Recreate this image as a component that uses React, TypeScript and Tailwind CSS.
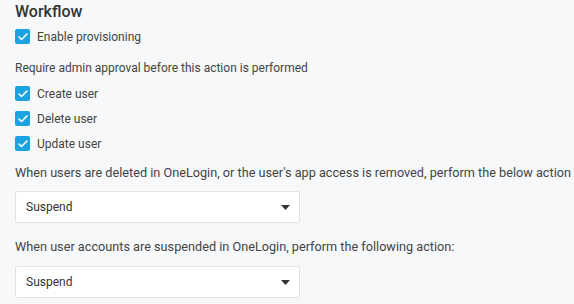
import { Check } from "lucide-react";

function Box({ label }: { label: string }) {
  return (
    <label className="flex items-center gap-[7px] h-[15px]">
      <span className="w-[15px] h-[15px] rounded-[2px] bg-[#1aa3e0] flex items-center justify-center">
        <Check size={12} strokeWidth={3.2} className="text-white" />
      </span>
      <span className="text-[12px] text-[#444]">{label}</span>
    </label>
  );
}

function Select({ value }: { value: string }) {
  return (
    <div className="w-[285px] h-[32px] bg-white border border-[#e3e3e3] rounded-[2px] flex items-center justify-between pl-[10px] pr-[9px]">
      <span className="text-[12px] text-[#333]">{value}</span>
      <svg width="9" height="5" viewBox="0 0 9 5">
        <path d="M0 0h9L4.5 5z" fill="#333" />
      </svg>
    </div>
  );
}

export default function App() {
  return (
    <main className="w-[574px] h-[304px] bg-[#f7f8fa] px-[15px] overflow-hidden" style={{ fontFamily: "Roboto, sans-serif" }}>
      <h2 className="text-[16px] font-medium text-[#333] leading-[24px]">Workflow</h2>
      <div className="mt-[5px]">
        <Box label="Enable provisioning" />
      </div>
      <p className="text-[12px] text-[#444] leading-[16px] mt-[16px]">Require admin approval before this action is performed</p>
      <div className="flex flex-col gap-[10px] mt-[10px]">
        <Box label="Create user" />
        <Box label="Delete user" />
        <Box label="Update user" />
      </div>
      <p className="text-[12.7px] text-[#444] leading-[16px] mt-[14px] whitespace-nowrap">
        When users are deleted in OneLogin, or the user's app access is removed, perform the below action
      </p>
      <div className="mt-[10px]">
        <Select value="Suspend" />
      </div>
      <p className="text-[12.7px] text-[#444] leading-[16px] mt-[16px]">
        When user accounts are suspended in OneLogin, perform the following action:
      </p>
      <div className="mt-[11px]">
        <Select value="Suspend" />
      </div>
    </main>
  );
}
